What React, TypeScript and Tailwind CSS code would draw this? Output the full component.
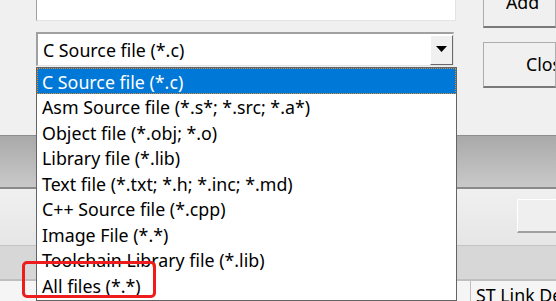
import React from "react";

const items = [
  "C Source file (*.c)",
  "Asm Source file (*.s*; *.src; *.a*)",
  "Object file (*.obj; *.o)",
  "Library file (*.lib)",
  "Text file (*.txt; *.h; *.inc; *.md)",
  "C++ Source file (*.cpp)",
  "Image File (*.*)",
  "Toolchain Library file (*.lib)",
  "All files (*.*)",
];

export default function App() {
  return (
    <div
      className="relative w-[556px] h-[301px] overflow-hidden bg-[#f0f0f0] flex flex-col text-black"
      style={{ fontFamily: '"Noto Sans", "Open Sans", sans-serif' }}
    >
      {/* dialog top area */}
      <div className="h-[135px] shrink-0 flex">
        <div className="w-[36px] shrink-0" />
        <div className="w-[420px] shrink-0 flex flex-col">
          <div className="h-[21px] bg-white border-l border-l-[#a0a0a0] border-b border-b-[#e3e3e3] border-r border-r-[#e3e3e3]" />
          <div className="mt-[11px] h-[34px] w-[418px] border-t-2 border-l-2 border-[#a0a0a0] border-b border-r border-b-[#e3e3e3] border-r-[#e3e3e3] bg-white flex items-center">
            <div className="flex-1 pl-[5px] text-[17.8px] leading-none pt-[3px] whitespace-nowrap">C Source file (*.c)</div>
            <div className="w-[23px] h-[30px] shrink-0 bg-[#f0f0f0] border-t border-l border-white border-r border-b border-r-[#696969] border-b-[#696969] flex items-center justify-center">
              <svg width="11" height="7" viewBox="0 0 11 7">
                <polygon points="0,0 11,0 5.5,6" fill="#000" />
              </svg>
            </div>
          </div>
        </div>
        <div className="flex-1 min-w-0 flex flex-col pl-[27px]">
          <div className="mt-[-8px] h-[36px] border border-[#adadad] border-b-2 border-b-[#7a7a7a] bg-[#f0f0f0] pl-[22px] pt-[1px] text-[17.8px] leading-none whitespace-nowrap overflow-hidden">
            Add
          </div>
          <div className="mt-[14px] h-[46px] border border-[#adadad] border-b-2 border-b-[#7a7a7a] bg-[#f0f0f0] pl-[42px] flex items-center text-[17.8px] whitespace-nowrap overflow-hidden">
            Close
          </div>
        </div>
      </div>
      {/* gray band */}
      <div className="h-[54px] shrink-0 border-t border-t-[#8e8e8e] border-b-2 border-b-[#8a8a8a] bg-gradient-to-b from-[#a9a9a9] to-[#c9c9c9]" />
      {/* light area with button */}
      <div className="h-[56px] shrink-0 bg-gradient-to-b from-[#f0f0f0] to-[#e6e6e6] flex justify-end pt-[10px] pb-[12px]">
        <div className="w-[39px] border-t border-l border-white border-b-2 border-b-[#a0a0a0] bg-[#efefef]" />
      </div>
      {/* darker band */}
      <div className="h-[36px] shrink-0 bg-[#d7d7d7] border-t border-t-[#c4c4c4] border-b-2 border-b-[#bfbfbf]" />
      {/* tab row */}
      <div className="flex-1 bg-[#f5f5f5] flex">
        <div className="w-[470px] shrink-0" />
        <div className="flex-1 min-w-0 overflow-hidden border-l border-[#c0c0c0] pl-[5px] pt-[6px] text-[17.8px] leading-none whitespace-nowrap">
          ST Link Debugger
        </div>
      </div>

      {/* dropdown popup */}
      <div className="absolute left-[36px] top-[67px] w-[421px] h-[234px] bg-white border border-[#646464] flex flex-col">
        {items.map((t, i) => (
          <div
            key={t}
            className={
              i === 0
                ? "h-[25.5px] shrink-0 bg-[#0078d7] text-white border border-dotted border-[#e08a2c] pl-[4px] pt-[4px] flex items-center text-[17.8px] leading-none whitespace-nowrap"
                : "h-[25.5px] shrink-0 pl-[5px] pt-[4px] flex items-center text-[17.8px] leading-none whitespace-nowrap"
            }
          >
            {t}
          </div>
        ))}
      </div>

      {/* red highlight */}
      <div className="absolute left-[22px] top-[261px] w-[134px] h-[37px] border-[3px] border-[#ee1c1c] rounded-[5px]" />
    </div>
  );
}
